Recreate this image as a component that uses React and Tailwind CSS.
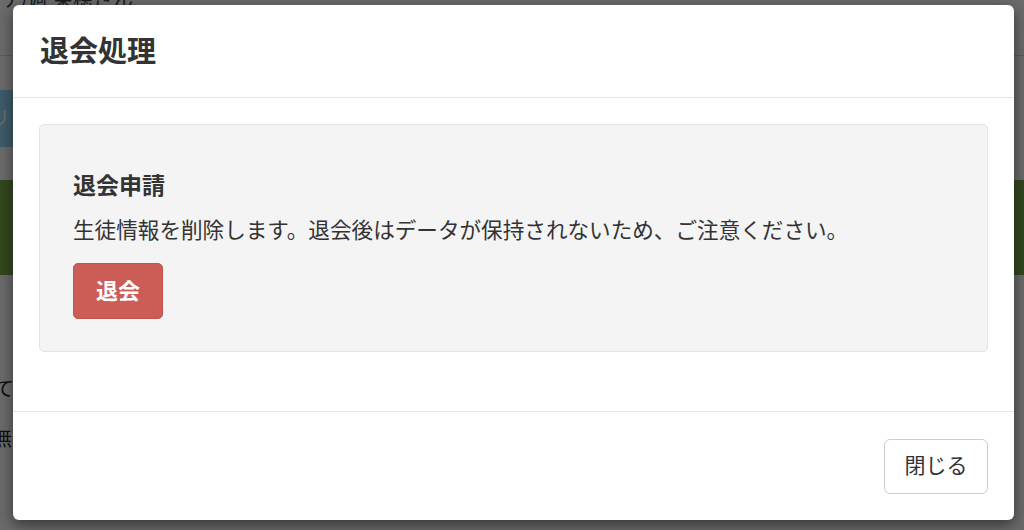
import React from "react";

const font = "font-['Liberation_Sans','Noto_Sans_CJK_JP',sans-serif]";

// page sitting behind the dialog, only the edges show
const BackPage = () => (
	<div className="flex flex-col w-full h-[530px] bg-white overflow-hidden">
		<div className="h-[56px] border-b border-[#dcdcdc] shrink-0">
			<div className="-mt-[15px] pl-[2px] text-[20px] text-[#444] whitespace-nowrap">ナ/週 茉穂さん</div>
		</div>
		<div className="mt-[34px] h-[57px] w-[80px] -ml-[50px] rounded-[4px] bg-[#94dcff] flex items-center justify-end pr-[20px] shrink-0">
			<span className="text-[20px] text-white">トリ</span>
		</div>
		<div className="mt-[33px] h-[95px] w-full bg-[#7ca947] shrink-0" />
		<div className="mt-[102px] -ml-[6px] text-[20px] leading-[24px] text-[#222]">て</div>
		<div className="mt-[26px] -ml-[8px] text-[20px] leading-[24px] text-[#222]">無</div>
	</div>
);

const App = () => {
	return (
		<div className={`relative w-[1024px] h-[530px] overflow-hidden ${font}`}>
			<BackPage />
			<div className="absolute inset-0 bg-black/[0.58]" />
			<div className="absolute left-[13px] top-[5px] w-[1001px] h-[515px] flex flex-col rounded-[6px] bg-white shadow-[0_5px_15px_rgba(0,0,0,0.5)] text-[#333]">
				<div className="h-[93px] shrink-0 flex items-center px-[27px] border-b border-[#e5e5e5]">
					<h4 className="mt-[2px] text-[29px] font-bold leading-none">退会処理</h4>
				</div>
				<div className="flex-1 px-[26px] pt-[26px]">
					<div className="flex flex-col items-start pt-[45px] pb-[32px] px-[33px] rounded-[5px] border border-[#e3e3e3] bg-[#f4f4f4]">
						<h4 className="text-[23px] font-bold leading-[32px]">退会申請</h4>
						<p className="mt-[14px] text-[21.6px] leading-[30px]">生徒情報を削除します。退会後はデータが保持されないため、ご注意ください。</p>
						<button className="mt-[17px] w-[90px] h-[56px] rounded-[5px] bg-[#cb5c56] border border-[#c4514c] text-white text-[22px] font-bold">
							退会
						</button>
					</div>
				</div>
				<div className="h-[109px] shrink-0 flex items-center justify-end px-[26px] border-t border-[#e5e5e5]">
					<button className="w-[104px] h-[55px] rounded-[6px] border border-[#cccccc] bg-white text-[21px] text-[#333]">
						閉じる
					</button>
				</div>
			</div>
		</div>
	);
};

export default App;
